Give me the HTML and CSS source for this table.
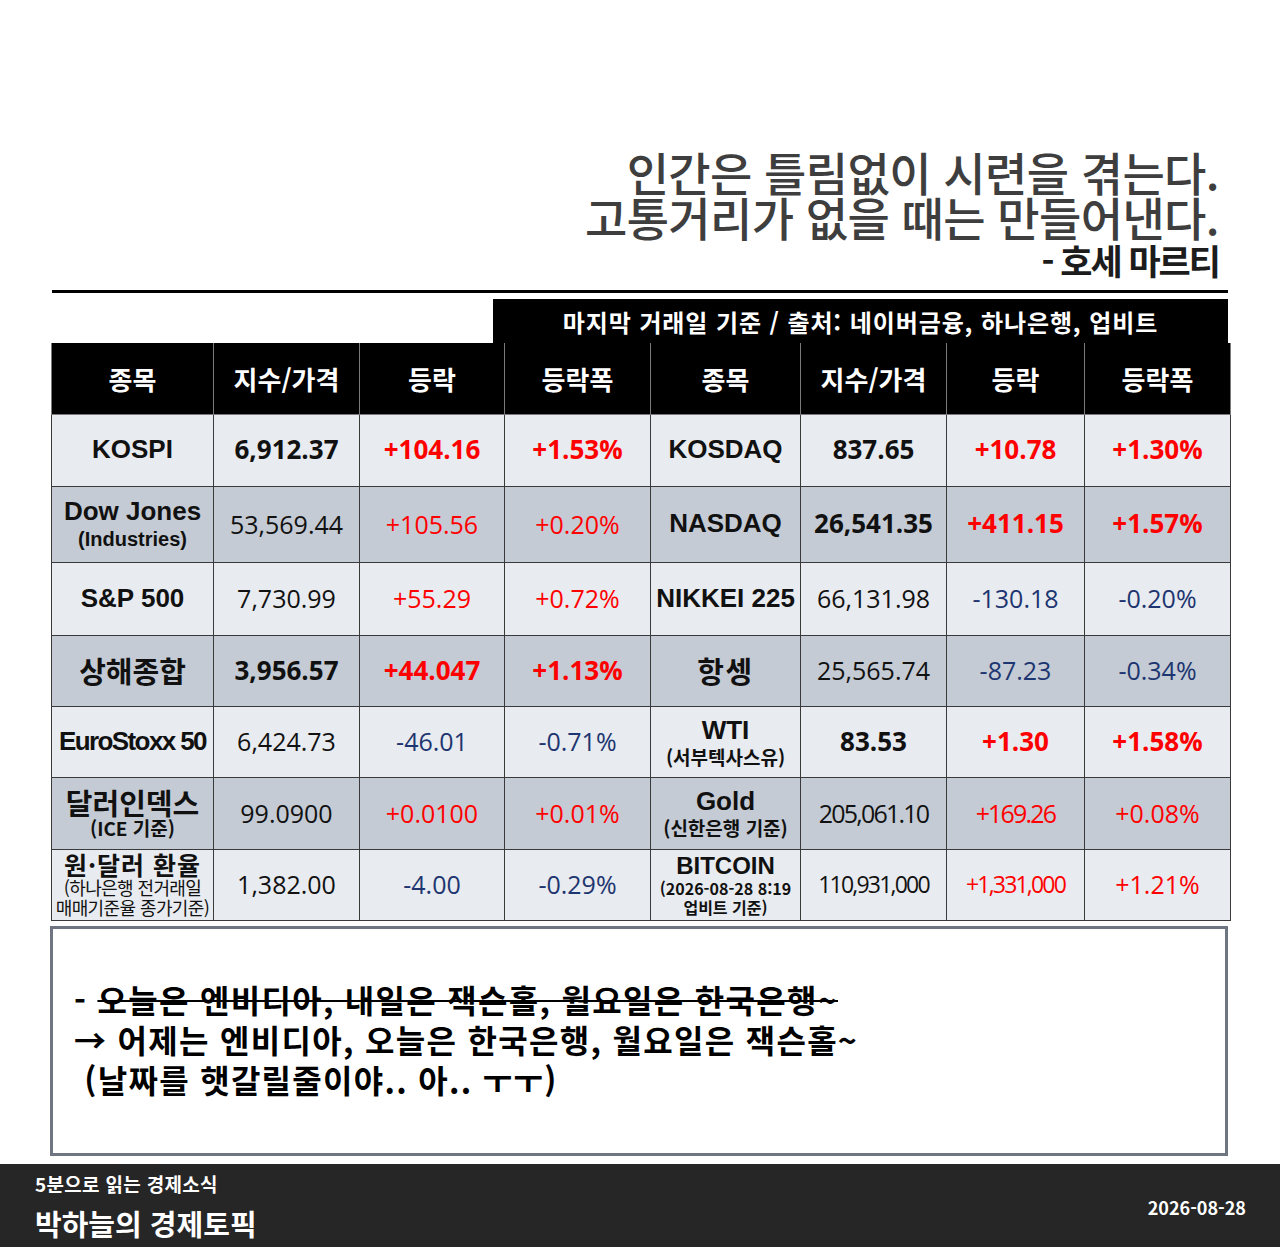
FILE: index.html
```html
<!DOCTYPE html>
<html lang="ko">
<head>
<meta charset="utf-8">
<title>경제토픽</title>
<link rel="stylesheet" href="styles.css">
</head>
<body>
<div class="page">
  <header class="quote">
    <div class="q-line">인간은 틀림없이 시련을 겪는다.</div>
    <div class="q-line">고통거리가 없을 때는 만들어낸다.</div>
    <div class="q-author">- 호세 마르티</div>
  </header>
  <div class="rule"></div>
  <div class="source">마지막 거래일 기준 / 출처: 네이버금융, 하나은행, 업비트</div>
  <table class="market">
    <colgroup>
      <col class="c1"><col class="c2"><col class="c3"><col class="c4">
      <col class="c5"><col class="c6"><col class="c7"><col class="c8">
    </colgroup>
    <thead>
      <tr>
        <th>종목</th><th>지수/가격</th><th>등락</th><th>등락폭</th>
        <th>종목</th><th>지수/가격</th><th>등락</th><th>등락폭</th>
      </tr>
    </thead>
    <tbody>
      <tr class="light r1">
        <td class="en">KOSPI</td><td class="num b">6,912.37</td><td class="num b up">+104.16</td><td class="num b up">+1.53%</td>
        <td class="en">KOSDAQ</td><td class="num b">837.65</td><td class="num b up">+10.78</td><td class="num b up">+1.30%</td>
      </tr>
      <tr class="dark r2">
        <td class="en"><div>Dow Jones</div><div class="sub-en">(Industries)</div></td><td class="num">53,569.44</td><td class="num up">+105.56</td><td class="num up">+0.20%</td>
        <td class="en">NASDAQ</td><td class="num b">26,541.35</td><td class="num b up">+411.15</td><td class="num b up">+1.57%</td>
      </tr>
      <tr class="light r3">
        <td class="en">S&amp;P 500</td><td class="num">7,730.99</td><td class="num up">+55.29</td><td class="num up">+0.72%</td>
        <td class="en">NIKKEI 225</td><td class="num">66,131.98</td><td class="num dn">-130.18</td><td class="num dn">-0.20%</td>
      </tr>
      <tr class="dark r4">
        <td class="ko">상해종합</td><td class="num b">3,956.57</td><td class="num b up">+44.047</td><td class="num b up">+1.13%</td>
        <td class="ko wide">항셍</td><td class="num">25,565.74</td><td class="num dn">-87.23</td><td class="num dn">-0.34%</td>
      </tr>
      <tr class="light r5">
        <td class="en tight">EuroStoxx 50</td><td class="num">6,424.73</td><td class="num dn">-46.01</td><td class="num dn">-0.71%</td>
        <td class="en"><div>WTI</div><div class="sub-ko">(서부텍사스유)</div></td><td class="num b">83.53</td><td class="num b up">+1.30</td><td class="num b up">+1.58%</td>
      </tr>
      <tr class="dark r6">
        <td class="ko"><div class="ko-main">달러인덱스</div><div class="sub-ko">(ICE 기준)</div></td><td class="num">99.0900</td><td class="num up">+0.0100</td><td class="num up">+0.01%</td>
        <td class="en"><div>Gold</div><div class="sub-ko">(신한은행 기준)</div></td><td class="num cond">205,061.10</td><td class="num cond up">+169.26</td><td class="num up">+0.08%</td>
      </tr>
      <tr class="light r7">
        <td class="ko small-name"><div class="fx">원·달러 환율</div><div class="sub-note">(하나은행 전거래일<br>매매기준율 종가기준)</div></td><td class="num">1,382.00</td><td class="num dn">-4.00</td><td class="num dn">-0.29%</td>
        <td class="en btc"><div class="btc-main">BITCOIN</div><div class="sub-btc">(2026-08-28 8:19<br>업비트 기준)</div></td><td class="num cond sm">110,931,000</td><td class="num cond sm up">+1,331,000</td><td class="num up">+1.21%</td>
      </tr>
    </tbody>
  </table>
  <section class="note">
    <div class="note-text">
      <p>- <s>오늘은 엔비디아, 내일은 잭슨홀, 월요일은 한국은행~</s></p>
      <p>→ 어제는 엔비디아, 오늘은 한국은행, 월요일은 잭슨홀~</p>
      <p>&nbsp;(날짜를 햇갈릴줄이야.. 아.. ㅜㅜ)</p>
    </div>
  </section>
  <footer class="footer">
    <div class="brand">
      <div class="brand-sub">5분으로 읽는 경제소식</div>
      <div class="brand-name">박하늘의 경제토픽</div>
    </div>
    <div class="date">2026-08-28</div>
  </footer>
</div>
</body>
</html>
```

FILE: styles.css
```css
* { box-sizing: border-box; }
html, body { margin: 0; padding: 0; background: #fff; }
body { font-family: "Noto Sans CJK KR", "Noto Sans", sans-serif; }

.page {
  width: 1280px;
  height: 1247px;
  padding-top: 149px;
  display: flex;
  flex-direction: column;
}

.quote {
  text-align: right;
  padding-right: 61px;
  color: #3e3e3e;
}
.q-line {
  font-size: 46px;
  font-weight: 500;
  letter-spacing: -0.6px;
  line-height: 45px;
}
.q-author {
  font-size: 35px;
  font-weight: 700;
  letter-spacing: -2px;
  line-height: 42px;
  color: #1c1c1c;
}

.rule {
  margin: 9px 52px 0 52px;
  height: 3px;
  background: #000;
}

.source {
  margin: 6px 0 0 493px;
  width: 735px;
  height: 44px;
  background: #000;
  color: #fff;
  font-size: 24px;
  font-weight: 700;
  display: flex;
  align-items: center;
  justify-content: center;
  letter-spacing: 0.9px;
}

.market {
  margin-left: 51px;
  width: 1179px;
  border-collapse: collapse;
  table-layout: fixed;
}
.c1 { width: 162px; }
.c2 { width: 146px; }
.c3 { width: 145px; }
.c4 { width: 146px; }
.c5 { width: 150px; }
.c6 { width: 146px; }
.c7 { width: 138px; }
.c8 { width: 146px; }

.market th {
  background: #000;
  color: #fff;
  font-size: 26px;
  font-weight: 700;
  height: 71px;
  border: 1px solid #7a7a7a;
  border-top: none;
  text-align: center;
  padding: 0;
}
.market td {
  border: 1px solid #3a3a3a;
  text-align: center;
  vertical-align: middle;
  padding: 0;
  color: #111;
  line-height: 1.15;
}
.light td { background: #e8ebef; }
.dark td { background: #c4cbd4; }
.r1 td { height: 72px; }
.r2 td { height: 76px; }
.r3 td { height: 73px; }
.r4 td { height: 71px; }
.r5 td { height: 71px; }
.r6 td { height: 72px; }
.r7 td { height: 71px; }

.en {
  font-family: "Liberation Sans", Arial, "Noto Sans CJK KR", sans-serif;
  font-weight: 700;
  font-size: 26px;
}
.ko {
  font-family: "Noto Sans CJK KR", sans-serif;
  font-weight: 700;
  font-size: 29px;
}
.ko.wide { letter-spacing: 1.5px; }
.ko-main { line-height: 1.05; }
.tight { letter-spacing: -1.6px; }
.sub-en {
  font-size: 20px;
  margin-top: 2px;
}
.sub-ko {
  font-family: "Noto Sans CJK KR", sans-serif;
  font-size: 19px;
  font-weight: 700;
  line-height: 1.15;
}
.fx {
  font-size: 25px;
  letter-spacing: 1px;
  line-height: 1.1;
}
.sub-note {
  font-family: "Noto Sans CJK KR", sans-serif;
  font-size: 18px;
  font-weight: 400;
  line-height: 1.1;
  letter-spacing: -0.6px;
  white-space: nowrap;
}
.btc-main { font-size: 24px; line-height: 1.1; }
.sub-btc {
  font-family: "Noto Sans CJK KR", sans-serif;
  font-size: 16px;
  font-weight: 700;
  line-height: 1.15;
  white-space: nowrap;
}

.num {
  font-family: "Open Sans", "Noto Sans CJK KR", sans-serif;
  font-size: 25px;
  font-weight: 400;
}
.num.b { font-weight: 700; font-size: 26px; }
.num.cond { letter-spacing: -1.8px; }
.num.sm { font-size: 23px; }
.up { color: #ff0000 !important; }
.dn { color: #1d3570 !important; }

.note {
  margin: 5px 0 0 50px;
  width: 1178px;
  height: 230px;
  border: 3px solid #6f7682;
  background: #fff;
  display: flex;
  align-items: center;
  padding-left: 21px;
  padding-bottom: 4px;
}
.note-text p {
  margin: 0;
  font-size: 32px;
  font-weight: 700;
  line-height: 40px;
  color: #000;
  letter-spacing: 1.3px;
}
.note-text s {
  text-decoration-thickness: 2px;
}

.footer {
  margin-top: auto;
  height: 83px;
  background: #262626;
  color: #fff;
  display: flex;
  justify-content: space-between;
  align-items: center;
  padding: 0 34px 0 35px;
}
.brand-sub {
  font-size: 19px;
  font-weight: 700;
  line-height: 22px;
  letter-spacing: 0.3px;
  margin-top: 2px;
}
.brand-name {
  font-size: 29px;
  font-weight: 700;
  line-height: 36px;
  margin-top: 10px;
}
.date {
  font-size: 18px;
  font-weight: 700;
  margin-top: 2px;
}
```
